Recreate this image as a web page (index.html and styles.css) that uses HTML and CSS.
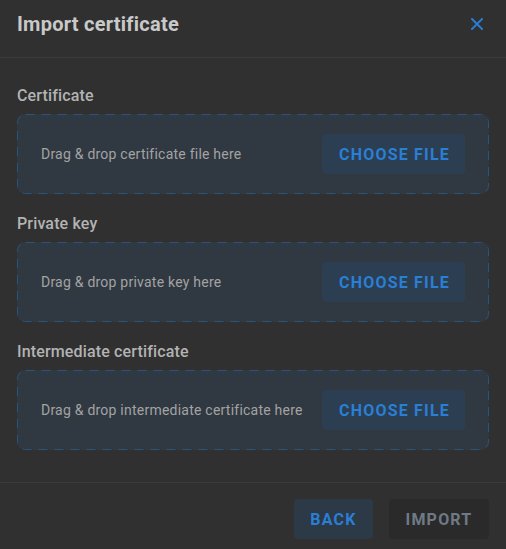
FILE: index.html
```html
<!DOCTYPE html>
<html>
<head>
<meta charset="utf-8">
<link rel="stylesheet" href="styles.css">
</head>
<body>
<div class="dialog">
  <div class="header">
    <h1 class="title">Import certificate</h1>
    <button class="close" aria-label="Close">
      <svg width="12" height="12" viewBox="0 0 12 12"><path d="M1 1 L11 11 M11 1 L1 11" stroke="#2a7bd0" stroke-width="2" stroke-linecap="square"/></svg>
    </button>
  </div>
  <div class="content">
    <div class="section">
      <div class="label">Certificate</div>
      <div class="dropzone">
        <svg class="dash" preserveAspectRatio="none"><rect x="0.5" y="0.5" width="471" height="79" rx="8" ry="8"/></svg>
        <span class="hint">Drag &amp; drop certificate file here</span>
        <button class="choose">CHOOSE FILE</button>
      </div>
    </div>
    <div class="section">
      <div class="label">Private key</div>
      <div class="dropzone">
        <svg class="dash" preserveAspectRatio="none"><rect x="0.5" y="0.5" width="471" height="79" rx="8" ry="8"/></svg>
        <span class="hint">Drag &amp; drop private key here</span>
        <button class="choose">CHOOSE FILE</button>
      </div>
    </div>
    <div class="section">
      <div class="label">Intermediate certificate</div>
      <div class="dropzone">
        <svg class="dash" preserveAspectRatio="none"><rect x="0.5" y="0.5" width="471" height="79" rx="8" ry="8"/></svg>
        <span class="hint">Drag &amp; drop intermediate certificate here</span>
        <button class="choose">CHOOSE FILE</button>
      </div>
    </div>
  </div>
  <div class="footer">
    <button class="btn back">BACK</button>
    <button class="btn import">IMPORT</button>
  </div>
</div>
</body>
</html>
```
FILE: styles.css
```css
html, body {
  margin: 0;
  padding: 0;
  background: #303030;
  font-family: Roboto, "Liberation Sans", sans-serif;
}
.dialog {
  width: 506px;
  height: 549px;
  display: flex;
  flex-direction: column;
}
.header {
  height: 58px;
  box-sizing: border-box;
  padding: 0 17px 9px 17px;
  display: flex;
  align-items: center;
  justify-content: space-between;
  border-bottom: 1px solid #3c3c3c;
}
.title {
  margin: 0;
  font-size: 20px;
  font-weight: 700;
  color: #c9c9c9;
  line-height: 24px;
  letter-spacing: 0.25px;
}
.close {
  background: none;
  border: 0;
  padding: 0;
  margin-right: 6px;
  width: 12px;
  height: 12px;
  display: flex;
}
.content {
  padding: 28px 17px 0 17px;
  display: flex;
  flex-direction: column;
  gap: 20px;
}
.label {
  font-size: 16px;
  font-weight: 500;
  color: #b3b3b3;
  line-height: 20px;
  margin-bottom: 8px;
  letter-spacing: 0.15px;
}
.dropzone {
  position: relative;
  height: 80px;
  box-sizing: border-box;
  border-radius: 8px;
  background: #303841;
  padding: 0 24px;
  display: flex;
  align-items: center;
  justify-content: space-between;
}
.dash {
  position: absolute;
  left: 0;
  top: 0;
  width: 472px;
  height: 80px;
  fill: none;
  stroke: #28547f;
  stroke-width: 1;
  stroke-dasharray: 9 7;
  pointer-events: none;
}
.hint {
  font-size: 14px;
  color: #a3a3a3;
  letter-spacing: 0.23px;
}
.choose {
  position: relative;
  height: 40px;
  width: 143px;
  border: 0;
  border-radius: 4px;
  background: #2c3e52;
  color: #2a7fd4;
  font-family: Roboto, "Liberation Sans", sans-serif;
  font-size: 16px;
  font-weight: 700;
  letter-spacing: 1.2px;
  padding: 0 0 0 2px;
}
.footer {
  margin-top: auto;
  border-top: 1px solid #3c3c3c;
  padding: 16px 17px 10px 17px;
  display: flex;
  justify-content: flex-end;
  gap: 16px;
}
.btn {
  height: 40px;
  border: 0;
  border-radius: 4px;
  font-family: Roboto, "Liberation Sans", sans-serif;
  font-size: 16px;
  font-weight: 700;
  letter-spacing: 1.2px;
}
.back {
  width: 79px;
  background: #2c3947;
  color: #2a7fd4;
}
.import {
  width: 100px;
  background: #2a2a2a;
  color: #6f7a86;
}
```
